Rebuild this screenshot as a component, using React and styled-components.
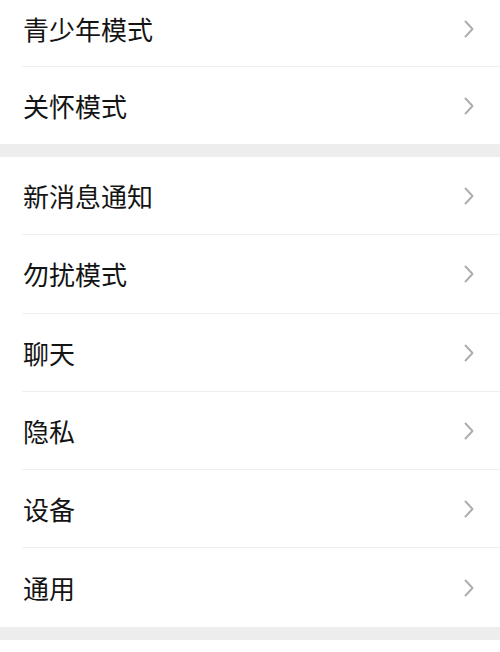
import React from "react";
import styled, { createGlobalStyle } from "styled-components";

const GlobalStyle = createGlobalStyle`
  html, body {
    margin: 0;
    padding: 0;
    background: #ffffff;
  }
  body {
    font-family: "Noto Sans CJK SC", "Noto Sans", sans-serif;
    -webkit-font-smoothing: antialiased;
  }
`;

const groups = [
  ["青少年模式", "关怀模式"],
  ["新消息通知", "勿扰模式", "聊天", "隐私", "设备", "通用"],
];

export default function App() {
  return (
    <Page>
      <GlobalStyle />
      {groups.map((items, gi) => (
        <Group key={gi} $first={gi === 0}>
          {items.map((label, i) => (
            <Row key={label} $tall={gi === 1} $last={i === items.length - 1}>
              <Label>{label}</Label>
              <Chevron />
            </Row>
          ))}
        </Group>
      ))}
      {/* next group, cut off by the bottom edge */}
      <Group $rest />
    </Page>
  );
}

function Chevron() {
  return (
    <Arrow width="10" height="18" viewBox="0 0 10 18" fill="none">
      <path
        d="M1.5 1.5 L8.5 9 L1.5 16.5"
        stroke="#adadad"
        strokeWidth="1.9"
        strokeLinecap="round"
        strokeLinejoin="round"
      />
    </Arrow>
  );
}

// Styled components
const Page = styled.div`
  width: 500px;
  height: 652px;
  overflow: hidden;
  background: #ededed;
  display: flex;
  flex-direction: column;
  gap: 13px;
`;

const Group = styled.div`
  background: #ffffff;
  display: flex;
  flex-direction: column;
  margin-top: ${(p) => (p.$first ? "-10px" : "0")};
  flex: ${(p) => (p.$rest ? "1 0 40px" : "0 0 auto")};
`;

const Row = styled.div`
  position: relative;
  height: ${(p) => (p.$tall ? "78.3px" : "77px")};
  display: flex;
  align-items: center;
  justify-content: space-between;
  padding: 0 26px 0 23px;
  box-sizing: border-box;

  &::after {
    content: "";
    display: ${(p) => (p.$last ? "none" : "block")};
    position: absolute;
    left: 22px;
    right: 0;
    bottom: 0;
    height: 1px;
    background: #efefef;
  }
`;

const Label = styled.span`
  font-size: 26px;
  color: #141414;
  line-height: 1;
`;

const Arrow = styled.svg`
  display: block;
  flex-shrink: 0;
`;
